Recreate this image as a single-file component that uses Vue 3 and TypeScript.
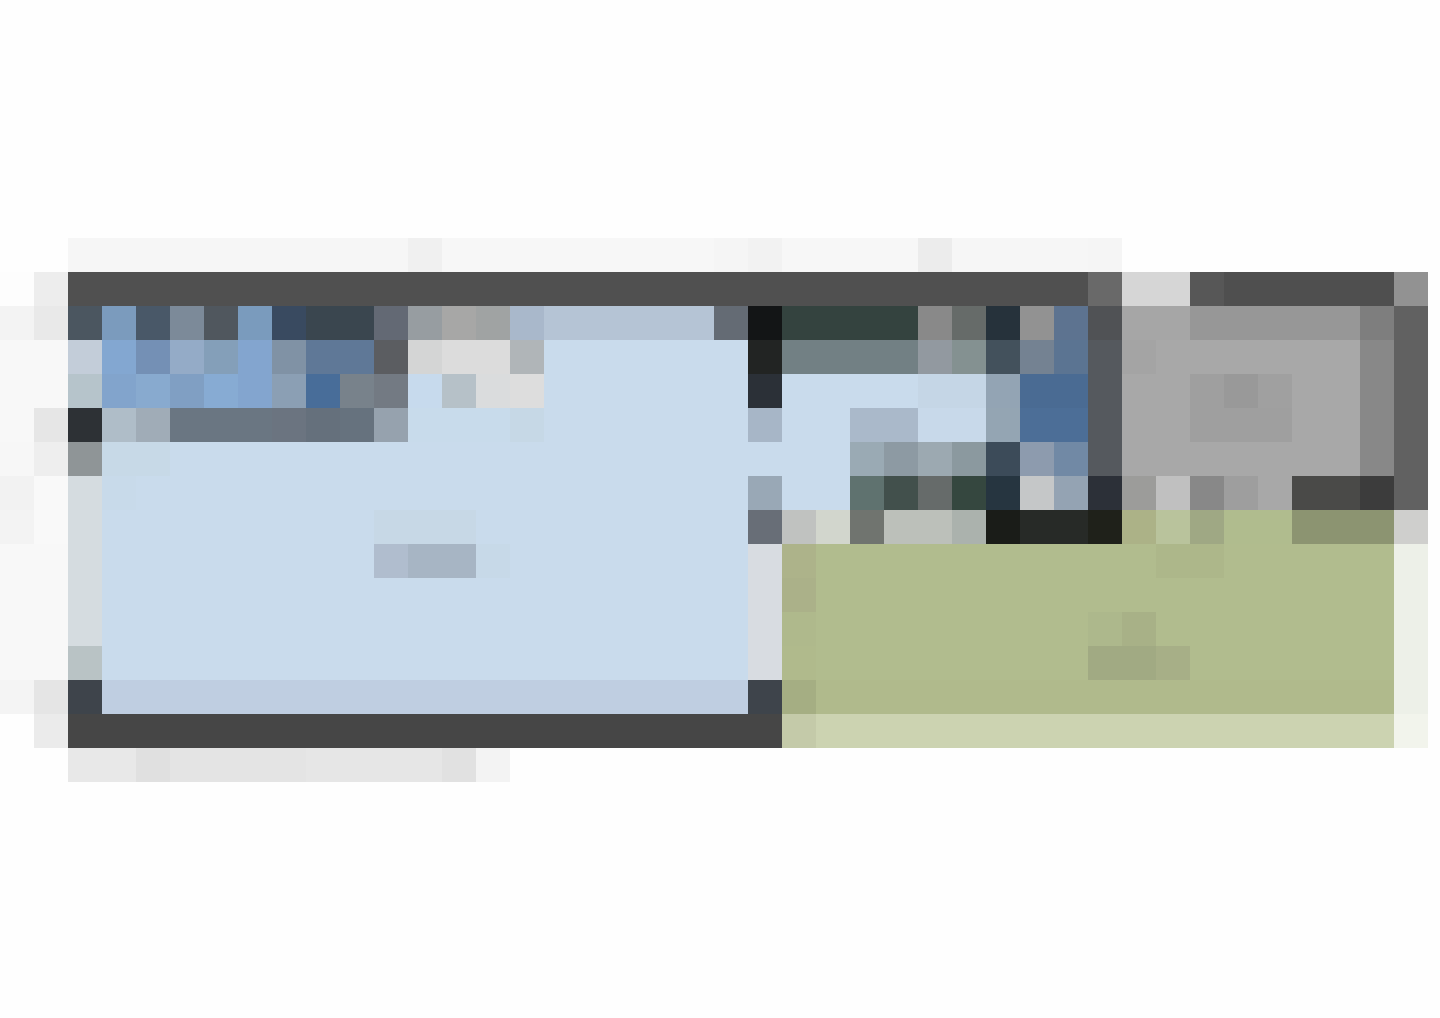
<script setup lang="ts">
type Run = { x: number; y: number; span: number; color: string }

const CELL = 34
const FIRST_ROW = 7

// Each row lists "colour" or "colour*cells", from left to right.
const rows: string[] = [
  'fefefe*2 f6f6f6*10 f0f0f0 f7f7f7*8 f5f5f5 f2f2f2 f7f7f7*4 ececec f6f6f6*4 f5f5f5',
  'fdfdfd ededed 505050*30 696969 d6d6d6*2 575757 4f4f4f*5 929292',
  'f3f3f3 e9e9e9 4b5660 7b9bbd 495868 7c8a99 50575e 7a9bbd 394a60 3a464f*2 636974 979da1 a7a7a6 a0a3a3 a9b8cb b5c4d5*5 646b74 131516 34433f*4 898989 666b69 26323b 929292 5d7390 505255 a6a6a6*2 979797*5 7e7e7e 616161',
  'f8f8f8*2 c3cdd9 83a7d1 7490b5 94abc7 849fb9 83a5cf 8092a5 5f7897*2 5b5d61 d4d5d5 dcdcdc*2 b0b5b8 c9dbec*6 222423 728084*4 9299a0 849191 43515c 748292 5b7492 55595e a4a4a4 a8a8a8*6 888888 616161',
  'f8f8f8*2 b6c4cb 82a4cc 88aacf 809fc3 87abd3 83a5cf 8b9fb4 486d99 78828b 737a83 c7daed b6c1c8 dadcdd dddddd c9dbec*6 2b3037 c9dbec*4 c5d6e6*2 93a4b4 4a6b93*2 55595e a8a8a8*2 9f9f9f 999999 a0a0a0 a8a8a8*2 888888 616161',
  'f8f8f8 e6e6e6 2d3135 afbdc8 a0acb7 6a7682*3 6b7480 65707c 66727e 96a2ae c8dbeb*3 c6d8e6 c9dbec*6 a7b6c7 c9dbec*2 aab9ca*2 c8d9ea*2 94a5b3 4c6e97*2 55595e a8a8a8*2 9f9f9f*3 a8a8a8*2 888888 616161',
  'f7f7f7 eeeeee 8f9597 c7d9e7*2 c9dbec*20 9aaab4 8d9aa3 9ca9b1 8b999f 3c4b59 8d9bae 7189a5 55595e a8a8a8*7 888888 616161',
  'f2f2f2 f9f9f9 d5dce0 c8daea c9dbec*18 99a8b6 c9dbec*2 5f726f 42504c 666b6a 35473f 263540 c5c7c8 94a3b3 2c3038 9c9c9a c0c0c0 888888 9e9e9e a8a8a8 4a4a48*2 3c3c3c 616161',
  'f3f3f3 f9f9f9 d5dce0 c9dbec*8 c7d8e6*3 c9dbec*8 686e77 c0c2c0 d2d6cd 70746f bcc0ba*2 abb2ad 1a1c18 272a27*2 1f211a acb287 b9c39c 9fa884 b0bc8e*2 8c9471*3 cfcfcd',
  'f8f8f8*2 d5dce0 c9dbec*8 b0bdce a7b5c4*2 c7d9e8 c9dbec*7 d8dce1 adb38a b1bc8e*10 adb78a*2 b1bc8e*5 edf0e8',
  'f8f8f8*2 d5dce0 c9dbec*19 d8dce1 abb189 b1bc8e*17 edf0e8',
  'f8f8f8*2 d5dce0 c9dbec*19 d8dce1 afb98c b1bc8e*8 adb88c a8b187 b1bc8e*7 edf0e8',
  'f8f8f8*2 b9c3c5 c9dbec*19 d8dce1 b0ba8c b1bc8e*8 a1aa83*2 a7af87 b1bc8e*6 edf0e8',
  'f4f4f4 e5e5e5 3e444b bfcee1*19 3e444b a5ae83 b0ba8c*17 edf0e8',
  'fefefe ebebeb 464646*21 c4caa9 ccd3b1*17 f2f4ec',
  'fefefe*2 e8e8e8*2 e0e0e0 e4e4e4*4 e6e6e6*4 e1e1e1 f3f3f3',
]

const runs: Run[] = rows.flatMap((row, r) => {
  let column = 0
  return row.split(' ').map((entry) => {
    const [color, count] = entry.split('*')
    const span = Number(count ?? 1)
    const run = { x: column * CELL, y: (FIRST_ROW + r) * CELL, span: span * CELL, color: `#${color}` }
    column += span
    return run
  })
})
</script>

<template>
  <main class="page">
    <svg class="mosaic" viewBox="0 0 1440 1018" aria-hidden="true" shape-rendering="crispEdges">
      <rect
        v-for="run in runs"
        :key="`${run.x}-${run.y}`"
        :x="run.x"
        :y="run.y"
        :width="run.span"
        :height="CELL"
        :fill="run.color"
      />
    </svg>
  </main>
</template>

<style scoped>
.page {
  background: #fefefe;
}

.mosaic {
  display: block;
  width: 100%;
  height: auto;
}
</style>

<style>
body {
  margin: 0;
  background: #fefefe;
}
</style>
